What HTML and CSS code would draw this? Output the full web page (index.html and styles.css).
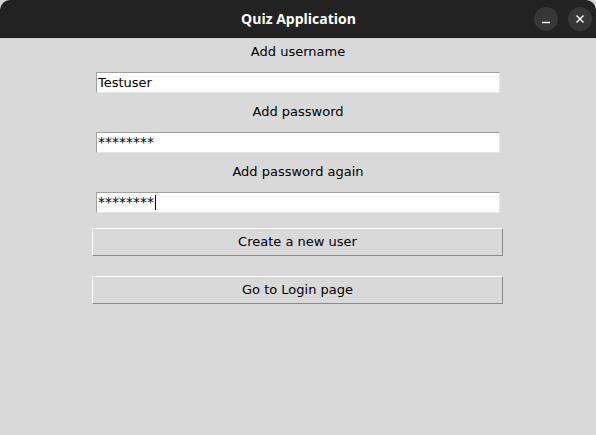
FILE: index.html
```html
<!DOCTYPE html>
<html>
<head>
<meta charset="utf-8">
<link rel="stylesheet" href="styles.css">
</head>
<body>
<div class="window">
  <div class="titlebar">
    <span class="title">Quiz Application</span>
    <div class="controls">
      <span class="ctl"><svg width="10" height="10" viewBox="0 0 10 10"><path d="M1 8.5h8" stroke="#fff" stroke-width="1.4"/></svg></span>
      <span class="ctl"><svg width="10" height="10" viewBox="0 0 10 10"><path d="M1.5 1.5l7 7M8.5 1.5l-7 7" stroke="#fff" stroke-width="1.4"/></svg></span>
    </div>
  </div>
  <div class="content">
    <div class="label">Add username</div>
    <div class="entry">Testuser</div>
    <div class="label">Add password</div>
    <div class="entry"><span class="secret">********</span></div>
    <div class="label">Add password again</div>
    <div class="entry"><span class="secret">********</span><span class="caret"></span></div>
    <div class="button first">Create a new user</div>
    <div class="button">Go to Login page</div>
  </div>
</div>
</body>
</html>
```
FILE: styles.css
```css
html, body {
  margin: 0;
  padding: 0;
  background: #d9d9d9;
}
.window {
  width: 596px;
  height: 435px;
  background: #d9d9d9;
  font-family: "DejaVu Sans", sans-serif;
  font-size: 13px;
  color: #000;
  overflow: hidden;
}
.titlebar {
  height: 37px;
  background: #222222;
  border-bottom: 1px solid #1a1a1a;
  border-top-right-radius: 10px;
  border-top-left-radius: 10px;
  display: flex;
  align-items: center;
  justify-content: center;
  position: relative;
}
.title {
  color: #ffffff;
  font-family: "Open Sans", "DejaVu Sans", sans-serif;
  font-weight: 700;
  font-size: 14px;
  margin-left: 1px;
}
.controls {
  position: absolute;
  right: 4px;
  top: 7px;
  display: flex;
  gap: 10px;
}
.ctl {
  width: 24px;
  height: 24px;
  border-radius: 50%;
  background: #373737;
  display: flex;
  align-items: center;
  justify-content: center;
}
.content {
  display: flex;
  flex-direction: column;
  align-items: center;
}
.label {
  height: 28px;
  line-height: 28px;
  text-align: center;
}
.label + .entry { margin-top: 6px; }
.entry + .label { margin-top: 5px; }
.entry {
  box-sizing: border-box;
  width: 404px;
  height: 21px;
  background: #ffffff;
  border-top: 1px solid #a0a0a0;
  border-left: 1px solid #a0a0a0;
  border-right: 1px solid #e4e4e4;
  border-bottom: 1px solid #e4e4e4;
  padding-left: 1px;
  line-height: 19px;
  font-size: 13px;
  display: flex;
  align-items: center;
}
.secret {
  font-size: 14px;
}
.caret {
  display: inline-block;
  width: 1px;
  height: 15px;
  background: #000;
  margin-left: 1px;
}
.button {
  box-sizing: border-box;
  width: 411px;
  height: 28px;
  margin-right: 1px;
  border-top: 1px solid #ffffff;
  border-left: 1px solid #ffffff;
  border-right: 1px solid #8a8a8a;
  border-bottom: 1px solid #8a8a8a;
  text-align: center;
  line-height: 26px;
  margin-top: 20px;
}
.button.first { margin-top: 15px; }
```
